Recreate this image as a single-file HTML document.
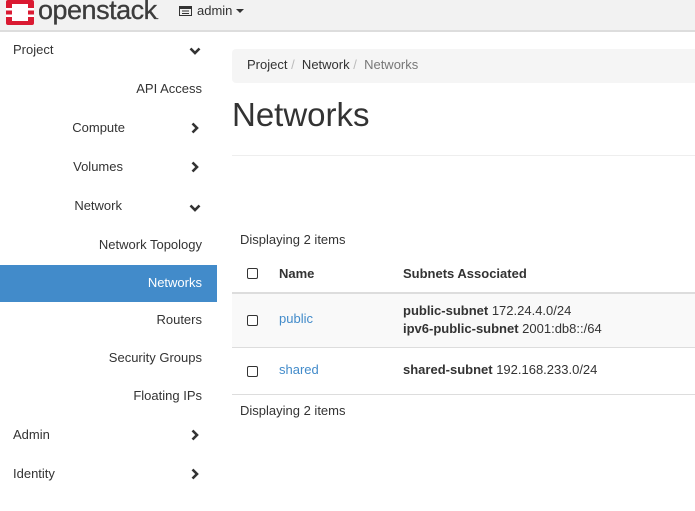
<!DOCTYPE html>
<html><head><style>
body{margin:0;width:695px;height:511px;overflow:hidden;background:#fff;font-family:"Liberation Sans",sans-serif;font-size:13px;color:#333;position:relative}
.a{position:absolute;white-space:nowrap}
.hdr{position:absolute;left:0;top:0;width:695px;height:30px;background:#f2f2f2;border-bottom:2px solid #ddd}
.sb{position:absolute;right:0;text-align:right}
.chev{position:absolute;left:189px;width:12px;height:12px}
.cb{position:absolute;width:9px;height:9px;border:1px solid #333;border-radius:2px;background:#fff}
a{color:#428bca;text-decoration:none}
b{font-weight:bold}
</style></head><body>
<div class="hdr"></div>
<svg class="a" style="left:6px;top:0" width="28" height="25" viewBox="0 0 28 25">
<rect x="0" y="0" width="28" height="25" rx="2" fill="#da1a32"/>
<rect x="0" y="8" width="28" height="2.5" fill="#fff"/>
<rect x="0" y="14.5" width="28" height="2.5" fill="#fff"/>
<rect x="6" y="4" width="16" height="17" fill="#fff"/>
</svg>
<div class="a" style="left:38px;top:-5px;font-size:27px;color:#3c3c3c;letter-spacing:-0.5px;-webkit-text-stroke:0.3px #3c3c3c">openstack<span style="font-size:8px">.</span></div>
<svg class="a" style="left:179px;top:6px" width="13" height="10"><rect x="0.5" y="0.5" width="12" height="9" fill="none" stroke="#333"/><rect x="0.5" y="0.5" width="12" height="2.5" fill="#333"/><line x1="3" y1="5" x2="10" y2="5" stroke="#333"/><line x1="3" y1="7.5" x2="10" y2="7.5" stroke="#333"/></svg>
<div class="a" style="left:197px;top:3px">admin</div>
<div class="a" style="left:236px;top:9px;width:0;height:0;border-left:4px solid transparent;border-right:4px solid transparent;border-top:4px solid #333"></div>

<div class="a" style="left:0;top:265px;width:217px;height:37px;background:#428bca"></div>
<div class="a" style="left:13px;top:42px">Project</div>
<div class="a" style="right:493px;top:81px">API Access</div>
<div class="a" style="right:570px;top:120px">Compute</div>
<div class="a" style="right:572px;top:159px">Volumes</div>
<div class="a" style="right:573px;top:198px">Network</div>
<div class="a" style="right:493px;top:237px">Network Topology</div>
<div class="a" style="right:493px;top:275px;color:#fff">Networks</div>
<div class="a" style="right:493px;top:312px">Routers</div>
<div class="a" style="right:493px;top:350px">Security Groups</div>
<div class="a" style="right:493px;top:388px">Floating IPs</div>
<div class="a" style="left:13px;top:427px">Admin</div>
<div class="a" style="left:13px;top:466px">Identity</div>
<svg class="chev" style="top:45px" viewBox="0 0 12 12"><path d="M1.5 3.5L6 8L10.5 3.5" fill="none" stroke="#333" stroke-width="2.6"/></svg>
<svg class="chev" style="top:122px" viewBox="0 0 12 12"><path d="M3.5 1.5L8 6L3.5 10.5" fill="none" stroke="#333" stroke-width="2.6"/></svg>
<svg class="chev" style="top:161px" viewBox="0 0 12 12"><path d="M3.5 1.5L8 6L3.5 10.5" fill="none" stroke="#333" stroke-width="2.6"/></svg>
<svg class="chev" style="top:202px" viewBox="0 0 12 12"><path d="M1.5 3.5L6 8L10.5 3.5" fill="none" stroke="#333" stroke-width="2.6"/></svg>
<svg class="chev" style="top:429px" viewBox="0 0 12 12"><path d="M3.5 1.5L8 6L3.5 10.5" fill="none" stroke="#333" stroke-width="2.6"/></svg>
<svg class="chev" style="top:468px" viewBox="0 0 12 12"><path d="M3.5 1.5L8 6L3.5 10.5" fill="none" stroke="#333" stroke-width="2.6"/></svg>

<div class="a" style="left:232px;top:49px;width:470px;height:34px;background:#f5f5f5;border-radius:4px"></div>
<div class="a" style="left:247px;top:57px">Project <span style="color:#bbb">/</span>&nbsp; Network <span style="color:#bbb">/</span>&nbsp; <span style="color:#777">Networks</span></div>
<div class="a" style="left:232px;top:96px;font-size:33px">Networks</div>
<div class="a" style="left:232px;top:155px;width:463px;height:1px;background:#eee"></div>

<div class="a" style="left:240px;top:232px">Displaying 2 items</div>
<div class="cb" style="left:247px;top:268px"></div>
<div class="a" style="left:279px;top:266px"><b>Name</b></div>
<div class="a" style="left:403px;top:266px"><b>Subnets Associated</b></div>
<div class="a" style="left:232px;top:292px;width:463px;height:2px;background:#ddd"></div>
<div class="a" style="left:232px;top:294px;width:463px;height:53px;background:#f9f9f9"></div>
<div class="cb" style="left:247px;top:315px"></div>
<div class="a" style="left:279px;top:311px"><a>public</a></div>
<div class="a" style="left:403px;top:303px"><b>public-subnet</b> 172.24.4.0/24</div>
<div class="a" style="left:403px;top:321px"><b>ipv6-public-subnet</b> 2001:db8::/64</div>
<div class="a" style="left:232px;top:347px;width:463px;height:1px;background:#ddd"></div>
<div class="cb" style="left:247px;top:366px"></div>
<div class="a" style="left:279px;top:362px"><a>shared</a></div>
<div class="a" style="left:403px;top:362px"><b>shared-subnet</b> 192.168.233.0/24</div>
<div class="a" style="left:232px;top:394px;width:463px;height:1px;background:#ddd"></div>
<div class="a" style="left:240px;top:403px">Displaying 2 items</div>
</body></html>
